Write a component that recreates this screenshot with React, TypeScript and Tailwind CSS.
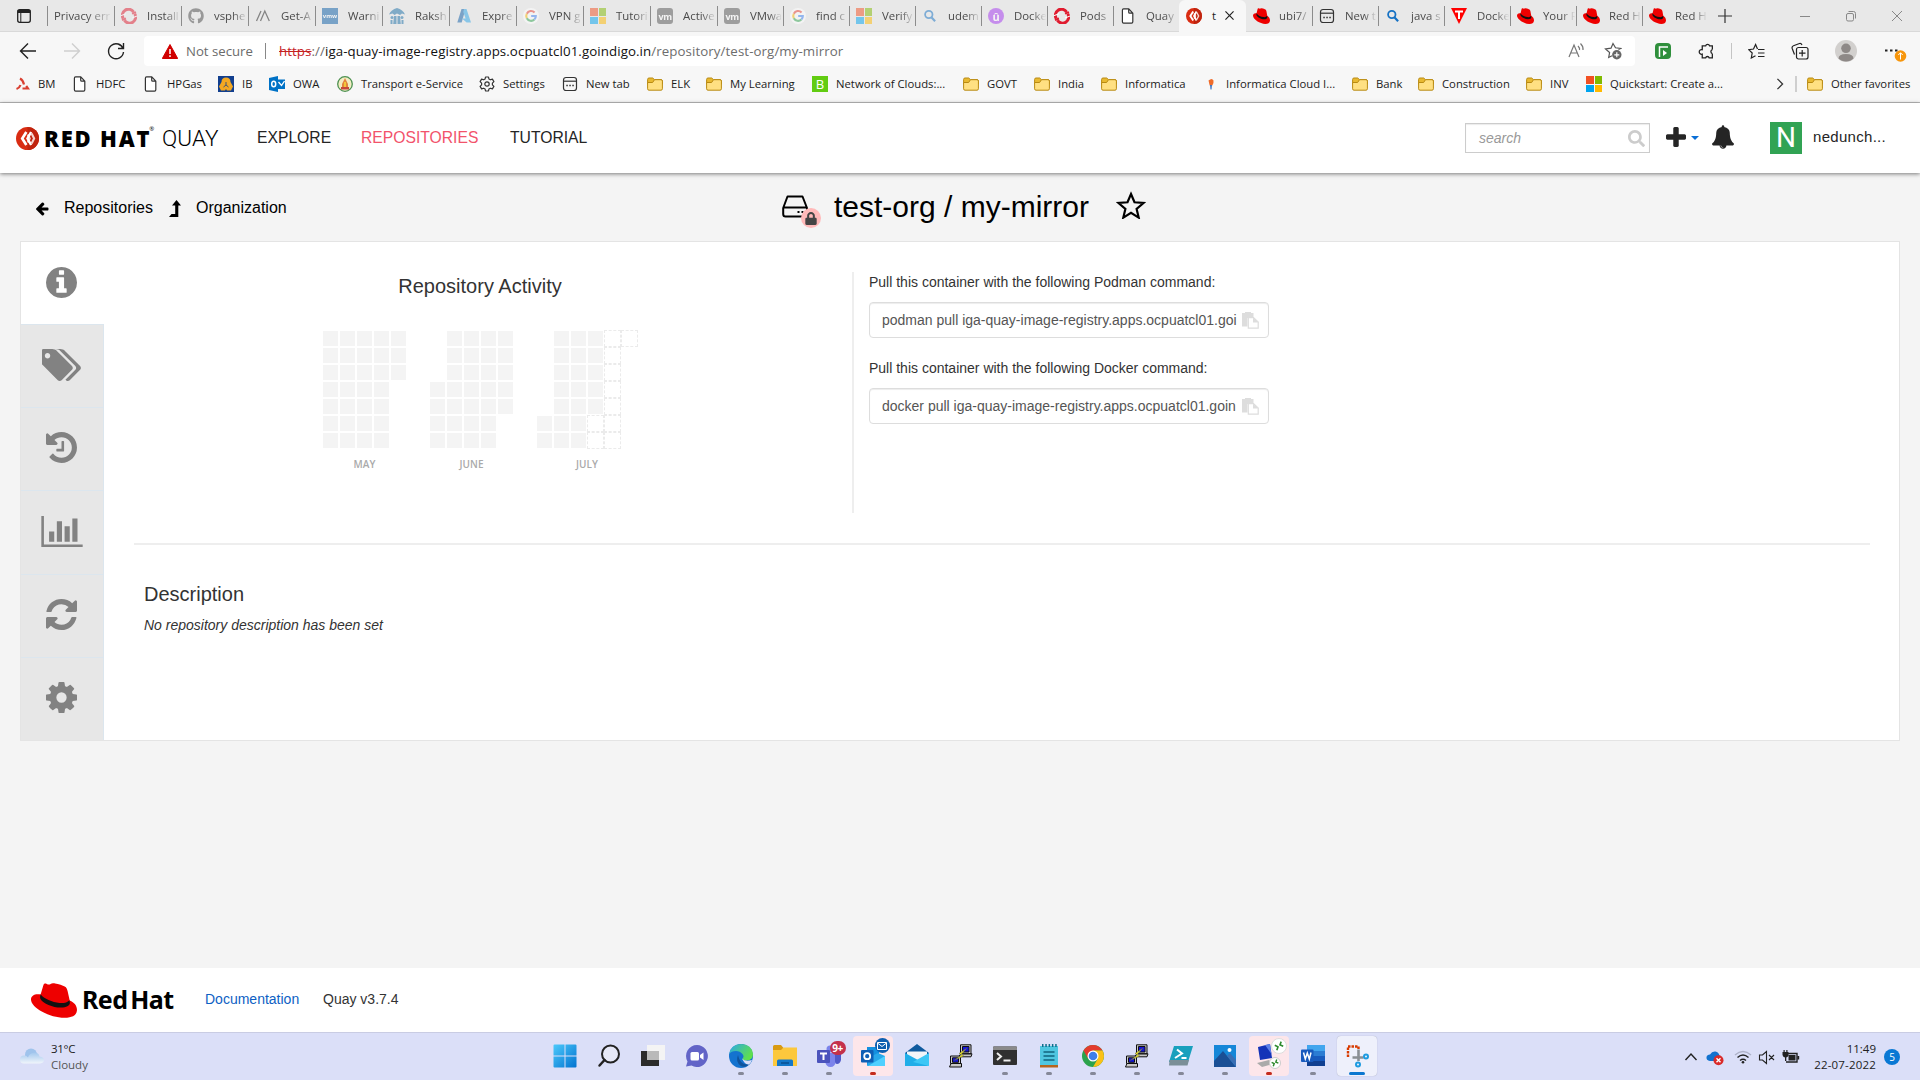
import React from "react";
import { FaSearch, FaLock, FaGithub } from "react-icons/fa";

type P = { children?: React.ReactNode; className?: string };

/* ---------- small drawings ---------- */

const RedHat = ({ className = "w-[17px] h-4" }: P) => (
  <svg viewBox="0 0 46 35" className={className} preserveAspectRatio="none">
    <path
      fill="#ee0000"
      d="M12.600 1.600C13 .6 14.200.2 15.400.7c1.600.8 2.600 1.200 3.800.6C20.400.7 22 .1 24 .4c3.600.6 8 2 9.700 3 1.800 1 2.500 2.600 3 5.200l2 9c5 2 7.700 6 7.200 10.200-.6 5-5.400 7-12.400 7C19 34.800 0 25 0 16.500c0-4 4-6 9.600-5z"
    />
    <path fill="#111" d="M9.600 11.300c-.5 2-.8 3.400-.1 4.600 2.400 4.600 12.500 8.600 20 8.700 5.500.1 9.500-1.500 9.400-5l-.5-2.400c-2 2.600-6 3-10 2.700-7-.5-15.500-4-18.800-8.600z" />
  </svg>
);
const Page = () => (
  <svg viewBox="0 0 16 16" className="h-4 w-4" fill="#fff" stroke="#333" strokeWidth="1.200" strokeLinejoin="round">
    <path d="M3.600.9h5.200l4 4.200v8.700q0 1.300-1.200 1.300h-8q-1.200 0-1.200-1.300V2.200Q2.400.9 3.600.9zM8.700 1v3.200q0 1 1 1h3" />
  </svg>
);
const OpenShift = () => (
  <svg viewBox="0 0 16 16" className="h-4 w-4" fill="none" stroke="#e01b2f" strokeWidth="3">
    <path d="M2.300 10.600A6 6 0 0 1 12.600 4M13.700 5.800A6 6 0 0 1 3.400 12.300" />
    <path d="M0 7.600l5-1.800M11 10l5-2" strokeWidth="1" stroke="#fff" />
    <path d="M11 5.600l4-1.500M1 12l4-1.500" strokeWidth="2" />
  </svg>
);
const Google = () => (
  <svg viewBox="0 0 18 18" className="h-4 w-4">
    <circle cx="9" cy="9" r="9" fill="#fff" />
    <g fill="none" strokeWidth="2.400">
      <path d="M13 5A5.400 5.400 0 0 0 4.300 6.400" stroke="#ea4335" />
      <path d="M4.300 6.400a5.400 5.400 0 0 0 0 5.200" stroke="#fbbc05" />
      <path d="M4.300 11.600A5.400 5.400 0 0 0 12.800 13" stroke="#34a853" />
      <path d="M12.800 13A5.400 5.400 0 0 0 14.400 9H9.200" stroke="#4285f4" />
    </g>
  </svg>
);
const Microsoft = () => (
  <span className="grid h-4 w-4 grid-cols-2 gap-px">
    <i className="bg-[#f25022]" />
    <i className="bg-[#7fba00]" />
    <i className="bg-[#00a4ef]" />
    <i className="bg-[#ffb900]" />
  </span>
);
const Vm = () => (
  <span className="flex h-4 w-4 items-center justify-center rounded-[3px] bg-[#555] text-[9px] font-bold leading-none tracking-[-0.5px] text-white">vm</span>
);
const Lens = () => (
  <svg viewBox="0 0 16 16" className="h-4 w-4" fill="none" stroke="#1672c4" strokeWidth="1.800">
    <circle cx="6.800" cy="6.500" r="3.700" />
    <path d="M9.600 9.600l3.500 3.700" strokeWidth="2.200" />
  </svg>
);
const Folder = () => (
  <svg viewBox="0 0 16 16" className="h-4 w-4" stroke="#b98a12" strokeWidth="1">
    <path fill="#e8b931" d="M.6 3.500Q.6 2 2 2h3.700l1.800 1.700H14q1.400 0 1.400 1.400V8H.6z" />
    <path fill="#ffe082" d="M.6 6.500h5L7.500 3.700H14q1.400 0 1.400 1.400v7.700q0 1.400-1.400 1.400H2Q.6 14.200.6 12.800z" />
  </svg>
);
const NewTab = () => (
  <svg viewBox="0 0 16 16" className="h-4 w-4" fill="none" stroke="#333" strokeWidth="1.200">
    <rect x="1.500" y="1.500" width="13" height="13" rx="2.500" />
    <path d="M1.500 5.200h13" />
    <path d="M4.300 9.500h1.500m1.500 0h1.500m1.500 0h1.500" strokeWidth="1.600" />
  </svg>
);
const QuayDot = ({ className = "h-4 w-4" }: P) => (
  <svg viewBox="0 0 24 24" className={className} fill="none">
    <circle cx="12" cy="12" r="12" fill="#d92c12" />
    <path d="M12 0a12 12 0 0 1 0 24z" fill="#c0240e" />
    <path stroke="#fff" strokeWidth="2.800" d="M10.800 5.200L6.500 12l4.300 6.800" />
    <path stroke="#f6d5cf" strokeWidth="2.200" d="M12.300 7.800l2 4.200-2 4.200" />
    <path stroke="#fff" strokeWidth="2.600" d="M15.800 5.200L12 12l3.800 6.800" />
    <path stroke="#f6d5cf" strokeWidth="2.200" d="M16.300 6.800l2.600 5.200-2.600 5.200" />
  </svg>
);
const Clipboard = ({ className }: P) => (
  <svg viewBox="0 0 17 17" className={className}>
    <path fill="#ddd" d="M0 1h3V0h6v1h2.500v5H5.500v8.500H0z" />
    <path fill="#fff" stroke="#ddd" strokeWidth="1.200" d="M6.300 5.600h5.200l4.700 4.300v6.300H6.300z" />
    <path fill="#ddd" d="M11 5.500v5h5.500z" />
  </svg>
);
const FA = ({ d, vb = "128 128 1536 1536", className, fill = "#828282" }: { d: string; vb?: string; className: string; fill?: string }) => (
  <svg viewBox={vb} className={className} fill={fill}>
    <path d={d} />
  </svg>
);

const dInfo =
  "M1152 1376v-160q0-14-9-23t-23-9h-96v-512q0-14-9-23t-23-9h-320q-14 0-23 9t-9 23v160q0 14 9 23t23 9h96v320h-96q-14 0-23 9t-9 23v160q0 14 9 23t23 9h448q14 0 23-9t9-23zm-128-896v-160q0-14-9-23t-23-9h-192q-14 0-23 9t-9 23v160q0 14 9 23t23 9h192q14 0 23-9t9-23zm640 416q0 209-103 385.500t-279.500 279.500-385.500 103-385.500-103-279.500-279.500-103-385.500 103-385.500 279.500-279.500 385.500-103 385.500 103 279.500 279.500 103 385.500z";
const dTags =
  "M384 448q0-53-37.500-90.500t-90.500-37.500-90.500 37.500-37.500 90.500 37.500 90.500 90.500 37.500 90.500-37.500 37.500-90.500zm1067 576q0 53-37 90l-491 492q-39 37-91 37-53 0-90-37l-715-716q-38-37-64.500-101t-26.500-117v-416q0-52 38-90t90-38h416q53 0 117 26.500t102 64.500l715 714q37 39 37 91zm384 0q0 53-37 90l-491 492q-39 37-91 37-36 0-59-14t-53-45l470-470q37-37 37-90 0-52-37-91l-715-714q-38-38-102-64.500t-117-26.500h224q53 0 117 26.500t102 64.500l715 714q37 39 37 91z";
const dHistory =
  "M1664 896q0 156-61 298t-164 245-245 164-298 61q-172 0-327-72.500t-264-204.500q-7-10-6.500-22.500t8.500-20.500l137-138q10-9 25-9 16 2 23 12 73 95 179 147t225 52q104 0 198.500-40.500t163.500-109.500 109.500-163.500 40.500-198.500-40.500-198.500-109.500-163.500-163.500-109.500-198.500-40.500q-98 0-188 35.500t-160 101.500l137 138q31 30 14 69-17 40-59 40h-448q-26 0-45-19t-19-45v-448q0-42 40-59 39-17 69 14l130 129q107-101 244.500-156.500t284.500-55.500q156 0 298 61t245 164 164 245 61 298zm-640-288v448q0 14-9 23t-23 9h-320q-14 0-23-9t-9-23v-64q0-14 9-23t23-9h224v-352q0-14 9-23t23-9h64q14 0 23 9t9 23z";
const dChart =
  "M640 896v512h-256v-512h256zm384-512v1024h-256v-1024h256zm1024 1152v128h-2048v-1536h128v1408h1920zm-640-896v768h-256v-768h256zm384-384v1152h-256v-1152h256z";
const dRefresh =
  "M1639 1056q0 5-1 7-64 268-268 434.500t-478 166.500q-146 0-282.500-55t-243.500-157l-129 129q-19 19-45 19t-45-19-19-45v-448q0-26 19-45t45-19h448q26 0 45 19t19 45-19 45l-137 137q71 66 161 102t187 36q134 0 250-65t186-179q11-17 53-117 8-23 30-23h192q13 0 22.500 9.500t9.500 22.500zm25-800v448q0 26-19 45t-45 19h-448q-26 0-45-19t-19-45 19-45l138-138q-148-137-349-137-134 0-250 65t-186 179q-11 17-53 117-8 23-30 23h-199q-13 0-22.500-9.500t-9.500-22.500v-7q65-268 270-434.500t480-166.500q146 0 284 55.500t245 156.500l130-129q19-19 45-19t45 19 19 45z";
const dCog =
  "M1152 896q0-106-75-181t-181-75-181 75-75 181 75 181 181 75 181-75 75-181zm512-109v222q0 12-8 23t-20 13l-185 28q-19 54-39 91 35 50 107 138 10 12 10 25t-9 23q-27 37-99 108t-94 71q-12 0-26-9l-138-108q-44 23-91 38-16 136-29 186-7 28-36 28h-222q-14 0-24.500-8.500t-11.500-21.500l-28-184q-49-16-90-37l-141 107q-10 9-25 9-14 0-25-11-126-114-165-168-7-10-7-23 0-12 8-23 15-21 51-66.500t54-70.500q-27-50-41-99l-183-27q-13-2-21-12.500t-8-23.500v-222q0-12 8-23t19-13l186-28q14-46 39-92-40-57-107-138-10-12-10-24 0-10 9-23 26-36 98.500-107.500t94.500-71.500q13 0 26 10l138 107q44-23 91-38 16-136 29-186 7-28 36-28h222q14 0 24.500 8.500t11.500 21.500l28 184q49 16 90 37l142-107q9-9 24-9 13 0 25 10 129 119 165 170 7 8 7 22 0 12-8 23-15 21-51 66.500t-54 70.500q26 50 41 98l183 28q13 2 21 12.500t8 23.500z";
const dBell =
  "M912 1696q0-16-16-16-59 0-101.500-42.500t-42.500-101.500q0-16-16-16t-16 16q0 73 51.500 124.500t124.500 51.500q16 0 16-16zm816-288q0 52-38 90t-90 38h-448q0 106-75 181t-181 75-181-75-75-181h-448q-52 0-90-38t-38-90q50-42 91-88t85-119.500 74.500-158.500 50-206 19.500-260q0-152 117-282.500t307-158.500q-8-19-8-39 0-40 28-68t68-28 68 28 28 68q0 20-8 39 190 28 307 158.500t117 282.500q0 139 19.500 260t50 206 74.500 158.500 85 119.500 91 88z";
const dPlus =
  "M1600 736v192q0 40-28 68t-68 28h-416v416q0 40-28 68t-68 28h-192q-40 0-68-28t-28-68v-416h-416q-40 0-68-28t-28-68v-192q0-40 28-68t68-28h416v-416q0-40 28-68t68-28h192q40 0 68 28t28 68v416h416q40 0 68 28t28 68z";
const dArrow =
  "M1664 896v128q0 53-32.500 90.500t-84.500 37.500h-704l293 294q38 36 38 90t-38 90l-75 76q-37 37-90 37-52 0-91-37l-651-652q-37-37-37-90 0-52 37-91l651-650q38-38 91-38 52 0 90 38l75 74q38 38 38 91t-38 91l-293 293h704q52 0 84.500 37.500t32.500 90.500z";

/* ---------- tab strip ---------- */

const GetA = () => (
  <svg viewBox="0 0 16 16" className="h-4 w-4" fill="none" stroke="#222" strokeWidth="1.300">
    <path d="M1.500 13L6 3M5.500 13L9.800 3 14.300 13" />
  </svg>
);
const Umbrella = () => (
  <svg viewBox="0 0 16 16" className="h-4 w-4" fill="#1b6fa8">
    <path d="M0 6.500Q2 1.500 8 0q6 1.500 8 6.500l-3-1-2 1.500L8 5.500 5.500 7 3.500 5.500z" />
    <path d="M5 8h2.500v8H4.200zM8.500 8H11l.8 8H8.500z" />
    <circle cx="3" cy="9.500" r="1.500" />
    <circle cx="13" cy="9.500" r="1.500" />
    <path d="M1.500 12h2v4h-2zM12.500 12h2v4h-2z" />
  </svg>
);
const Azure = () => (
  <svg viewBox="0 0 16 16" className="h-4 w-4">
    <path fill="#0f5ea8" d="M5.500 1h4L5.700 14.500H1.300z" />
    <path fill="#2da6e8" d="M8 1h2.500L15 14.500h-4.400L6 10.500h3.600L7.300 4z" />
  </svg>
);
const Udemy = () => (
  <span className="flex h-4 w-4 items-center justify-center rounded-full bg-[#a435f0] text-[11px] font-bold leading-none text-white">û</span>
);
const RedT = () => (
  <svg viewBox="0 0 16 16" className="h-4 w-4">
    <path d="M0 0h16L8 16z" fill="#f00" />
    <path d="M4 3.500h8M8 3.500V11" stroke="#fff" strokeWidth="2" />
  </svg>
);
const Vmw = () => (
  <span className="flex h-4 w-4 items-center justify-center bg-[#0a5fa8] text-[6px] font-bold leading-none text-white">vmw</span>
);

const tabs: { t: string; i?: React.ReactNode; dim?: boolean; active?: boolean }[] = [
  { t: "Privacy err" },
  { t: "Install", i: <OpenShift />, dim: true },
  { t: "vsphe", i: <FaGithub className="h-4 w-4" />, dim: true },
  { t: "Get-A", i: <GetA />, dim: true },
  { t: "Warni", i: <Vmw />, dim: true },
  { t: "Raksh", i: <Umbrella />, dim: true },
  { t: "Expre", i: <Azure />, dim: true },
  { t: "VPN g", i: <Google />, dim: true },
  { t: "Tutori", i: <Microsoft />, dim: true },
  { t: "Active", i: <Vm />, dim: true },
  { t: "VMwa", i: <Vm />, dim: true },
  { t: "find c", i: <Google />, dim: true },
  { t: "Verify", i: <Microsoft />, dim: true },
  { t: "udem", i: <Lens />, dim: true },
  { t: "Docke", i: <Udemy />, dim: true },
  { t: "Pods", i: <OpenShift /> },
  { t: "Quay", i: <Page /> },
  { t: "t", i: <QuayDot />, active: true },
  { t: "ubi7/", i: <RedHat /> },
  { t: "New t", i: <NewTab /> },
  { t: "java s", i: <Lens /> },
  { t: "Docke", i: <RedT /> },
  { t: "Your R", i: <RedHat /> },
  { t: "Red H", i: <RedHat /> },
  { t: "Red H", i: <RedHat /> },
];

function TabStrip() {
  return (
    <div className="flex h-8 items-center bg-[#e8e8e8] text-[11.400px] text-[#4a4a4a] shadow-[inset_0_-1px_0_#d9d9d9]">
      <div className="flex w-[47px] justify-center">
        <svg viewBox="0 0 16 16" className="h-4 w-4" fill="none" stroke="#222" strokeWidth="1.300">
          <rect x="1.700" y="1.700" width="12.600" height="12.600" rx="2" />
          <path d="M1.700 3.500h12.600" strokeWidth="3" />
          <path d="M4.800 4v10" strokeWidth="1" />
        </svg>
      </div>
      {tabs.map((tab, n) => (
        <div
          key={n}
          className={
            (n < 10 || n === 17 ? "w-[67px] " : "w-[66px] ") +
            (tab.active ? "flex h-8 shrink-0 items-center rounded-t-md bg-[#f7f7f7] text-[#222]" : "flex h-8 shrink-0 items-center")
          }
        >
          <i className={tab.active || n === 18 ? "h-5 w-px shrink-0" : "h-5 w-px shrink-0 bg-[#8c8c8c]"} />
          {tab.i ? (
            <span className={tab.dim ? "ml-1.5 flex w-[26px] shrink-0 opacity-50" : "ml-1.5 flex w-[26px] shrink-0"}>{tab.i}</span>
          ) : (
            <span className="w-1.5 shrink-0" />
          )}
          {tab.active ? (
            <span className="flex items-center gap-[9px]">
              t
              <svg viewBox="0 0 10 10" className="h-[9px] w-[9px]" stroke="#222" strokeWidth="1.300">
                <path d="M.5.5l9 9M9.500.5l-9 9" />
              </svg>
            </span>
          ) : (
            <span className="flex-1 overflow-hidden whitespace-nowrap [mask-image:linear-gradient(to_right,black_55%,transparent_98%)]">{tab.t}</span>
          )}
        </div>
      ))}
      <svg viewBox="0 0 14 14" className="ml-[10px] h-[14px] w-[14px]" stroke="#333" strokeWidth="1.200">
        <path d="M7 0v14M0 7h14" />
      </svg>
      <svg viewBox="0 0 104 12" className="ml-auto mr-[17px] h-3 w-[104px]" fill="none" stroke="#888" strokeWidth="1">
        <path d="M1 6.500h10M93 1l10 10M103 1L93 11" />
        <rect x="47.500" y="3.500" width="7" height="7.500" rx="1.500" />
        <path d="M49.500 1.500h5q2 0 2 2v5" />
      </svg>
    </div>
  );
}

/* ---------- address bar ---------- */

function AddressBar() {
  return (
    <div className="flex h-[38px] items-center bg-[#f7f7f7]">
      <svg viewBox="0 0 144 20" className="h-5 w-36 shrink-0" fill="none" stroke="#222" strokeWidth="1.400">
        <path d="M36 10H20.500M28 2.500L20.500 10l7.500 7.500" />
        <path d="M64 10h15.500M72 2.500l7.500 7.500-7.500 7.500" stroke="#cfcfcf" />
        <path d="M123.200 8A7.500 7.500 0 1 0 123.500 11M123.500 2v5.500H118" />
      </svg>
      <div className="flex h-[30px] w-[1491px] shrink-0 items-center rounded bg-white">
        <svg viewBox="0 0 16 15" className="ml-[18px] h-[15px] w-4">
          <path d="M8 .5L15.700 14.500H.3z" fill="#d00000" stroke="#d00000" strokeLinejoin="round" />
          <path d="M8 5v5M8 11.200v1.700" stroke="#fff" strokeWidth="1.500" />
        </svg>
        <span className="ml-2 w-[70px] whitespace-nowrap pt-px text-[13.200px] text-[#6b6b6b]">Not secure</span>
        <i className="mx-[9px] h-4 w-px bg-[#888]" />
        <span className="ml-1 whitespace-nowrap pt-px text-[13.300px] tracking-[0.080px] text-[#6d6d6d]">
          <span className="text-[#c5221f] line-through">https</span>://<span className="text-[#111]">iga-quay-image-registry.apps.ocpuatcl01.goindigo.in</span>
          /repository/test-org/my-mirror
        </span>
        <svg viewBox="0 0 54 18" className="ml-auto mr-[13px] h-[18px] w-[54px]" fill="none" stroke="#777" strokeWidth="1.200">
          <path d="M1 15L6 3l5 12M2.600 11h6.800M10 4q2 2 1.500 4M12.500 1.500q3 3 2.500 6.500" />
          <path d="M50.500 7.500l2-1-5-.7L45 1.500 43 6.200l-5.500.8 4.100 3.500-.9 5 3.300-1.700" stroke="#555" />
          <circle cx="48.800" cy="12.800" r="4.700" fill="#666" stroke="none" />
          <path d="M48.800 10.300v5M46.300 12.800h5" stroke="#fff" />
        </svg>
      </div>
      <div className="ml-5 flex h-4 w-4 items-center justify-center rounded-sm bg-[#2f8f3c]">
        <svg viewBox="0 0 16 16" className="h-4 w-4" fill="none" stroke="#fff" strokeWidth="1.500">
          <path d="M4.500 14V4h8.500" />
          <path d="M8 7l4 3-4 3z" fill="#fff" stroke="none" />
        </svg>
      </div>
      <svg viewBox="0 0 16 16" className="ml-[27px] h-[17px] w-[17px]" fill="none" stroke="#222" strokeWidth="1.200">
        <path d="M5 2.800h2.200a1.900 1.900 0 0 1 3.700 0H13.500v3.400M13.500 10v4H10.500a1.700 1.700 0 0 0-3.300 0H4V10.500a2.200 2.200 0 1 1 0-4.200V2.800h1M13.500 6.200a2 2 0 0 0 0 3.800" />
      </svg>
      <i className="ml-4 h-4 w-px bg-[#c4c4c4]" />
      <svg viewBox="0 0 18 16" className="ml-4 h-4 w-[18px]" fill="none" stroke="#222" strokeWidth="1.200">
        <path d="M9.500 6L7.600 1.500 5.500 6l-4.800.7L4.200 10l-.9 5L7.500 12.800M10 6.500h6.500M10 10h6.500M10 13.500h6.500" />
      </svg>
      <svg viewBox="0 0 18 18" className="ml-[25px] h-[18px] w-[18px]" fill="none" stroke="#222" strokeWidth="1.200">
        <rect x="5.500" y="5.500" width="11.500" height="11.500" rx="2" />
        <path d="M11.200 8v6.500M8 11.200h6.500M3.500 12.500L1.200 6.500q-.6-2 1.300-2.700l6-2.300q1.600-.5 2.500 1.500" />
      </svg>
      <svg viewBox="0 0 22 22" className="ml-[26px] h-[22px] w-[22px]">
        <circle cx="11" cy="11" r="11" fill="#d2d0ce" />
        <circle cx="11" cy="8.300" r="4.800" fill="#8e8987" />
        <path d="M3.500 18.500q0-4.500 7.500-4.500t7.500 4.500q-3 3-7.500 3t-7.500-3z" fill="#8e8987" />
      </svg>
      <svg viewBox="0 0 24 24" className="ml-[27px] h-6 w-6">
        <path d="M1 11.500h2.500M6 11.500h2.500M11 11.500h2.500" stroke="#222" strokeWidth="2.200" />
        <circle cx="16.500" cy="17" r="5.800" fill="#f7960c" />
        <path d="M16.500 20.500v-6.500M14.300 16l2.200-2.300 2.200 2.300" stroke="#fff" fill="none" />
      </svg>
    </div>
  );
}

/* ---------- favourites ---------- */

const Bm = () => (
  <svg viewBox="0 0 16 16" className="h-4 w-4" fill="none" stroke="#d94032" strokeWidth="2.200">
    <path d="M6 2.500q3 1.500 4 6M2.500 13q3-1 4-4M8.500 12.500h5.500l-1.800-2.500" />
  </svg>
);
const Ib = () => (
  <svg viewBox="0 0 16 16" className="h-4 w-4">
    <path fill="#123f8e" d="M0 0h16v16H0z" />
    <path fill="#f4a822" d="M8 1.500q4.500 0 4.500 4.500l2.500 4.500-2 4H9l-1-1.500-1 1.500H3l-2-4L3.500 6q0-4.500 4.500-4.500z" />
    <path stroke="#123f8e" fill="none" strokeWidth=".8" d="M8 6v3L5.500 11M8 9l2.500 2" />
  </svg>
);
const Owa = () => (
  <svg viewBox="0 0 16 16" className="h-4 w-4">
    <path fill="#0072c6" d="M0 2l9-2v16l-9-2zM9 3.500h7v9.500H9z" />
    <path fill="none" stroke="#fff" strokeWidth="1.300" d="M9.500 6l3 3.500L15.500 5" />
    <ellipse cx="4.700" cy="8" rx="2" ry="2.800" fill="none" stroke="#fff" strokeWidth="1.500" />
  </svg>
);
const Emblem = () => (
  <svg viewBox="0 0 16 16" className="h-4 w-4">
    <circle cx="8" cy="8" r="7.300" fill="#f3edc4" stroke="#4d9151" strokeWidth="1.300" />
    <path d="M8 2l3 6v3H5V8z" fill="#e2873c" />
    <path d="M4 11h8v2.500H4z" fill="#c5483a" />
    <path d="M7 6h2v5H7z" fill="#f2c838" />
  </svg>
);
const Gear = () => (
  <svg viewBox="0 0 16 16" className="h-4 w-4" fill="none" stroke="#333" strokeWidth="1.200" strokeLinejoin="round">
    <path d="M6.500 1h3l.4 2 1.500.8 2-.7 1.500 2.500-1.500 1.500v1.800l1.500 1.500-1.500 2.500-2-.7-1.500.8-.4 2h-3l-.4-2-1.500-.8-2 .7-1.500-2.500 1.500-1.500V7.100L1.100 5.600l1.500-2.500 2 .7L6.100 3z" />
    <circle cx="8" cy="8" r="2.200" />
  </svg>
);
const GreenB = () => <span className="flex h-4 w-4 items-center justify-center bg-[#62cc12] text-[13px] leading-none text-white">B</span>;
const Pin = () => (
  <svg viewBox="0 0 16 16" className="h-4 w-4">
    <path d="M6.500 4.500q3.500-3 5 0 .5 2-1.200 5H7.700z" fill="#ef6c2b" />
    <path d="M8 9h2l-.5 4.500h-1z" fill="#3a72c4" />
  </svg>
);

const favs: [string, React.ReactNode, string][] = [
  ["BM", <Bm />, "w-[58px]"],
  ["HDFC", <Page />, "w-[71px]"],
  ["HPGas", <Page />, "w-[75px]"],
  ["IB", <Ib />, "w-[51px]"],
  ["OWA", <Owa />, "w-[68px]"],
  ["Transport e-Service", <Emblem />, "w-[142px]"],
  ["Settings", <Gear />, "w-[83px]"],
  ["New tab", <NewTab />, "w-[85px]"],
  ["ELK", <Folder />, "w-[59px]"],
  ["My Learning", <Folder />, "w-[106px]"],
  ["Network of Clouds:...", <GreenB />, "w-[151px]"],
  ["GOVT", <Folder />, "w-[71px]"],
  ["India", <Folder />, "w-[67px]"],
  ["Informatica", <Folder />, "w-[101px]"],
  ["Informatica Cloud I...", <Pin />, "w-[150px]"],
  ["Bank", <Folder />, "w-[66px]"],
  ["Construction", <Folder />, "w-[108px]"],
  ["INV", <Folder />, "w-[60px]"],
  ["Quickstart: Create a...", <Microsoft />, "w-[190px]"],
];

function Favourites() {
  return (
    <div className="flex h-[33px] items-center border-b border-[#bdbdbd] bg-[#f7f7f7] pb-1 pl-[14px] text-[11.300px] text-[#1b1b1b]">
      {favs.map(([t, icon, w]) => (
        <div key={t} className={"flex shrink-0 items-center gap-2 whitespace-nowrap " + w}>
          {icon}
          {t}
        </div>
      ))}
      <svg viewBox="0 0 8 14" className="h-3 w-2" fill="none" stroke="#333" strokeWidth="1.500">
        <path d="M1 1l6 6-6 6" />
      </svg>
      <i className="ml-[11px] mr-[10px] h-4 w-0.5 bg-[#cfcfcf]" />
      <div className="flex items-center gap-2 whitespace-nowrap">
        <Folder />
        Other favorites
      </div>
    </div>
  );
}

/* ---------- Quay page ---------- */

function Header() {
  return (
    <header className="relative z-10 flex h-[70px] shrink-0 items-center bg-white shadow-[0_1px_4px_rgba(0,0,0,0.5)]">
      <QuayDot className="ml-4 h-[23px] w-[23px]" />
      <span className="ml-[5px] flex w-[118px] whitespace-nowrap font-['Open_Sans'] text-[22px] font-extrabold tracking-[1.800px] text-black">
        RED HAT<span className="-ml-0.5 mt-1 text-[6px] font-normal leading-none tracking-normal">®</span>
      </span>
      <span className="w-[95px] pt-0.5 font-['Roboto'] text-[22.500px] font-light tracking-[0.100px] text-black">QUAY</span>
      <nav className="flex text-[15.700px] text-[#252525]">
        <a className="w-[104px]">EXPLORE</a>
        <a className="w-[149px] text-[#f2536b]">REPOSITORIES</a>
        <a>TUTORIAL</a>
      </nav>
      <div className="ml-auto flex h-[30px] w-[185px] items-center justify-between border border-[#ccc] pl-[13px] pr-1 text-sm italic text-[#999] shadow-[inset_0_1px_1px_rgba(0,0,0,0.08)]">
        search
        <FaSearch className="h-[17px] w-[17px] text-[#ccc]" />
      </div>
      <FA d={dPlus} vb="192 128 1408 1408" className="-mt-0.5 ml-4 h-5 w-5" fill="#252525" />
      <svg viewBox="0 0 8 4" className="ml-[5px] h-1 w-2" fill="#0a6fd6">
        <path d="M0 0h8L4 4z" />
      </svg>
      <FA d={dBell} vb="64 0 1664 1792" className="-mt-0.5 ml-[13px] h-6 w-[22px]" fill="#252525" />
      <span className="ml-9 flex h-8 w-8 items-center justify-center bg-[#31a354] font-['Roboto'] text-[28px] text-white">N</span>
      <span className="ml-[11px] mr-[18px] w-[89px] pb-0.5 text-[15px] tracking-[0.300px] text-[#252525]">nedunch...</span>
    </header>
  );
}

function TitleRow() {
  return (
    <div className="grid h-[68px] shrink-0 grid-cols-[782px_1fr] items-center text-black">
      <div className="flex items-center pl-[35px]">
        <FA d={dArrow} vb="128 128 1536 1664" className="mt-1 h-[14px] w-[14px]" fill="#000" />
        <span className="ml-[15px] w-[105px] pt-0.5 text-base">Repositories</span>
        <svg viewBox="0 0 12 17" className="mt-0.5 h-[17px] w-3">
          <path d="M7.500 0l4.500 5.500H9.300V17H0l2.500-3H6.200V5.500H3z" fill="#000" />
        </svg>
        <span className="ml-[15px] pt-0.5 text-base">Organization</span>
      </div>
      <div className="flex items-center">
        <div className="relative h-[34px] w-10">
          <svg viewBox="0 0 27 23" className="absolute left-0 top-[5px] h-[23px] w-[27px]" fill="none" stroke="#000" strokeWidth="2" strokeLinejoin="round">
            <path d="M5.500 1.500h15L25 13v6q0 2.500-2 2.500H3.500q-2.300 0-2.300-2.500v-6zM1.500 12.500h23.500" />
            <path d="M15.500 17h2M19.500 17h2" />
          </svg>
          <span className="absolute left-[19px] top-[18px] flex h-5 w-5 items-center justify-center rounded-full bg-[#ffb9b9]">
            <FaLock className="h-[13px] w-[12px] text-[#444]" />
          </span>
        </div>
        <h1 className="ml-3 w-[282px] whitespace-nowrap text-[30px] leading-none">test-org / my-mirror</h1>
        <svg viewBox="0 0 30 28" className="-mt-1 h-7 w-[30px]" fill="none" stroke="#000" strokeWidth="2.200">
          <path d="M15 3l3.500 8.300 9 .7-6.900 5.900 2.100 8.700L15 21.900l-7.700 4.700 2.100-8.700L2.500 12l9-.7z" />
        </svg>
      </div>
    </div>
  );
}

/* one string per weekday row: f = past day, d = upcoming day, . = outside the month */
const months: [string, string[]][] = [
  ["MAY", ["fffff", "fffff", "fffff", "ffff.", "ffff.", "ffff.", "ffff."]],
  ["JUNE", [".ffff", ".ffff", ".ffff", "fffff", "fffff", "ffff.", "ffff."]],
  ["JULY", [".fffdd", ".fffd.", ".fffd.", ".fffd.", ".fffd.", "fffdd.", "fffdd."]],
];

function Activity() {
  return (
    <section className="flex w-[692px] flex-col items-center pt-[1px]">
      <h3 className="h-[58px] text-xl leading-[26px] text-[#333]">Repository Activity</h3>
      <div className="flex gap-6">
        {months.map(([name, rows]) => (
          <div key={name} className="flex flex-col items-center">
            <div className="flex flex-col gap-0.5">
              {rows.map((r, i) => (
                <div key={i} className="flex h-[15px] gap-0.5">
                  {r.split("").map((c, k) => (
                    <i
                      key={k}
                      className={
                        c === "f"
                          ? "h-[15px] w-[15px] bg-[#f4f4f4]"
                          : c === "d"
                            ? "-m-px h-[17px] w-[17px] border border-dashed border-[#ebebeb]"
                            : "h-[15px] w-[15px]"
                      }
                    />
                  ))}
                </div>
              ))}
            </div>
            <span className="mt-2 font-['Open_Sans'] text-[10px] font-semibold leading-4 tracking-[0.100px] text-[#aaa]">{name}</span>
          </div>
        ))}
      </div>
    </section>
  );
}

function Pull({ tool, cmd }: { tool: string; cmd: string }) {
  return (
    <div className="h-[86px] text-sm">
      <p className="h-[30px] leading-5 text-[#333]">Pull this container with the following {tool} command:</p>
      <div className="flex h-9 w-[400px] items-center rounded border border-[#ddd] pl-3 text-[#555] shadow-[inset_0_1px_1px_rgba(0,0,0,0.075)]">
        <span className="w-[355px] overflow-hidden whitespace-nowrap">{cmd}</span>
        <Clipboard className="ml-[5px] mt-px h-[17px] w-[17px]" />
      </div>
    </div>
  );
}

function Main() {
  const side = [
    <FA d={dTags} vb="0 128 1835 1515" className="h-8 w-[39px]" />,
    <FA d={dHistory} className="h-[31px] w-[31px]" />,
    <FA d={dChart} vb="0 128 2048 1536" className="h-[31px] w-[42px]" />,
    <FA d={dRefresh} className="h-[31px] w-[31px]" />,
    <FA d={dCog} className="h-[31px] w-[31px]" />,
  ];
  return (
    <main className="mx-5 flex h-[500px] shrink-0 border border-[#e4e4e4] bg-white">
      <aside className="flex w-[83px] shrink-0 flex-col">
        <div className="flex h-[82px] items-center justify-center pb-0.5 pr-[2px]">
          <FA d={dInfo} className="h-[31px] w-[31px]" />
        </div>
        {side.map((s, i) => (
          <div key={i} className="flex flex-1 items-center justify-center border-r border-t border-[#dce6ee] bg-[#e7e7e7] pb-[3px] pr-px">
            {s}
          </div>
        ))}
      </aside>
      <div className="flex-1 pl-[30px] pr-[29px] pt-[30px]">
        <div className="flex h-[271px]">
          <div className="h-[241px] w-[720px] border-r-2 border-[#eee]">
            <Activity />
          </div>
          <div className="pl-[15px]">
            <Pull tool="Podman" cmd="podman pull iga-quay-image-registry.apps.ocpuatcl01.goi" />
            <Pull tool="Docker" cmd="docker pull iga-quay-image-registry.apps.ocpuatcl01.goin" />
          </div>
        </div>
        <hr className="border-t-2 border-[#eee]" />
        <div className="pl-[10px] pt-9 text-[#333]">
          <h3 className="text-xl leading-[26px]">Description</h3>
          <p className="mt-2 text-sm italic leading-5">No repository description has been set</p>
        </div>
      </div>
    </main>
  );
}

function Footer() {
  return (
    <footer className="flex h-16 shrink-0 items-center bg-white text-sm">
      <RedHat className="ml-[31px] h-[35px] w-[46px]" />
      <span className="ml-[5px] w-[123px] whitespace-nowrap font-['Noto_Sans'] text-[25px] font-bold tracking-[-0.600px] text-black [word-spacing:-3px]">Red Hat</span>
      <a className="w-[118px] pb-0.5 text-[#0e5fc4]">Documentation</a>
      <span className="pb-0.5 text-[#333]">Quay v3.7.4</span>
    </footer>
  );
}

/* ---------- taskbar ---------- */

const S = ({ children, vb = "0 0 24 24" }: P & { vb?: string }) => (
  <svg viewBox={vb} className="h-6 w-6">
    {children}
  </svg>
);
const Putty = () => (
  <S>
    <path fill="#c8c8c8" stroke="#111" d="M11.500.8h10.500v9H11.500zM10 12l2-2.200h11l-1 3H11zM1.500 12h10v7.500h-10zM.5 23l1.500-3.500h10.500V23z" />
    <path fill="#1414d8" stroke="#111" d="M13.500 2.500h6.500v5.500h-6.500zM3.500 13.800h6v4.500h-6z" />
    <path fill="#f5ee20" stroke="#555" strokeWidth=".5" d="M18 4l-8 5.500 2.500 1.500L5 16.500l9.500-4.500-2-2z" />
  </S>
);

const apps: { i: React.ReactNode; run?: boolean; alert?: boolean; active?: boolean }[] = [
  {
    i: (
      <S>
        <defs>
          <linearGradient id="win" x1="0" y1="0" x2="1" y2="1">
            <stop offset="0" stopColor="#4cc9fb" />
            <stop offset="1" stopColor="#0273d0" />
          </linearGradient>
        </defs>
        <path fill="url(#win)" d="M.5 1.500Q.5.500 1.500.500H11.500V11.500H.5zM12.500.5h10q1 0 1 1v10h-11zM.5 12.500h11v11h-10q-1 0-1-1zM12.500 12.500h11v10q0 1-1 1h-10z" />
      </S>
    ),
  },
  {
    i: (
      <S>
        <circle cx="13.500" cy="10" r="8.500" fill="#e6e8f7" stroke="#222" strokeWidth="2" />
        <path d="M7.500 16l-5 5.500" stroke="#222" strokeWidth="2.500" strokeLinecap="round" />
      </S>
    ),
  },
  {
    i: (
      <S>
        <path fill="#2b2b2b" d="M0 7h18v15H0z" />
        <path fill="#f4f4f4" d="M6 1h18v15H6z" />
        <path fill="#b9b9b9" d="M6 7h12v9H6z" />
      </S>
    ),
  },
  {
    i: (
      <S>
        <path fill="#6264c7" d="M12 1a11 11 0 1 1-5.500 20.600L1 22.500l1.500-5A11 11 0 0 1 12 1z" />
        <rect x="5.500" y="8" width="8.500" height="8.500" rx="1.500" fill="#fff" />
        <path fill="#fff" d="M15 11l3.500-2.500v7.500L15 13.500z" />
      </S>
    ),
  },
  {
    run: true,
    i: (
      <S>
        <defs>
          <linearGradient id="edge" x1="0" y1="0" x2="1" y2=".5">
            <stop offset="0" stopColor="#2aa8ea" />
            <stop offset="1" stopColor="#5fe04c" />
          </linearGradient>
        </defs>
        <circle cx="12" cy="12" r="12" fill="#1473cf" />
        <path fill="url(#edge)" d="M.2 10Q2 0 12 0q11 .5 12 10 0 6-6.500 6.500-4 0-4-2 2-2 0-4.500Q11 7 7 7 2 7.200.2 10z" />
        <path fill="#dbdff8" d="M13 14.500q3 3.500 10 1.500-1 3-3.500 5-4-1-6.500-6.500z" />
        <path fill="#10549c" d="M9 11q-3 7 3 11 4 2 8-1.500-9 1-11-9.500z" />
      </S>
    ),
  },
  {
    run: true,
    i: (
      <S>
        <path fill="#d99a11" d="M0 2.500Q0 1 1.500 1H8l2.500 3H16v4H0z" />
        <path fill="#fcc83d" d="M0 6h8l2.500-2.500H24V22H0z" />
        <path fill="#1377c9" d="M4 22v-5q0-1.500 1.500-1.500h13q1.500 0 1.500 1.500v5z" />
        <path stroke="#0b4f91" strokeWidth="1.500" d="M8 19h8" />
      </S>
    ),
  },
  {
    run: true,
    i: (
      <span className="relative block h-6 w-6">
        <S>
          <circle cx="13" cy="5" r="3.500" fill="#7b83eb" />
          <path fill="#7b83eb" d="M8 9h11v8q-1 6-5.500 6T8 17z" />
          <path fill="#5059c9" d="M18 9h6v7q-1 4-4 4-2 0-2-3z" />
          <rect x="0" y="6" width="13" height="13" rx="1" fill="#4b53bc" />
          <path stroke="#fff" strokeWidth="2" d="M3 9.500h7M6.500 9.500V16" />
        </S>
        <span className="absolute -right-[5px] -top-[3px] flex h-[14px] w-4 items-center justify-center rounded-full bg-[#c4314b] text-[10px] font-bold tracking-[-0.500px] text-white">9+</span>
      </span>
    ),
  },
  {
    alert: true,
    i: (
      <span className="relative block h-6 w-6">
        <S>
          <path fill="#1490df" d="M6 3h12v18H6z" />
          <path fill="#28a8ea" d="M9 13l8-4 7 3v10H6z" />
          <path fill="#50d0ff" d="M7 22l17-10v10z" />
          <rect x="0" y="6" width="12.500" height="12.500" rx="1" fill="#0f5fb5" />
          <circle cx="6.200" cy="12.200" r="3" fill="none" stroke="#fff" strokeWidth="1.800" />
        </S>
        <span className="absolute -right-[5px] -top-[6px] flex h-[15px] w-[15px] items-center justify-center rounded-full bg-[#0d5fb0]">
          <svg viewBox="0 0 10 8" className="h-2 w-[10px]" fill="none" stroke="#fff">
            <path d="M.5.5h9v7h-9zM.5 1L5 4.500 9.500 1" />
          </svg>
        </span>
      </span>
    ),
  },
  {
    i: (
      <S>
        <path fill="#0f5a9e" d="M0 9L12 0l12 9v4H0z" />
        <path fill="#f2f5f8" d="M2 7.500h20v6L12 18 2 13.500z" />
        <path fill="#20aee8" d="M0 9l24 13H0z" />
        <path fill="#3cc7f5" d="M24 9L8 18l16 4z" />
      </S>
    ),
  },
  { i: <Putty /> },
  {
    run: true,
    i: (
      <S>
        <rect y="2.500" width="24" height="18.500" rx="1" fill="#303030" />
        <path fill="#8a8a8a" d="M0 3.500q0-1 1-1h22q1 0 1 1v2.500H0z" />
        <path fill="none" stroke="#eee" strokeWidth="2" d="M4 9l4 3.500L4 16M10.500 16.500h7" />
      </S>
    ),
  },
  {
    run: true,
    i: (
      <S>
        <path fill="#b5651d" d="M3 20h18v3.500H3z" />
        <path fill="#4fc6e0" d="M3 2h18v19H3z" />
        <path stroke="#0d6f8c" strokeWidth="3" strokeDasharray="1.500 1.800" d="M5 1.500h15" />
        <path stroke="#12647e" strokeWidth="1.600" d="M6.500 8h11M6.500 12h11M6.500 16h11" />
      </S>
    ),
  },
  {
    run: true,
    i: (
      <S>
        <circle cx="12" cy="12" r="11" fill="#2ba24c" />
        <path fill="#e33b2e" d="M2.500 6.500A11 11 0 0 1 21.500 6.500H12v5L7.200 14.700z" />
        <path fill="#fbc116" d="M21.500 6.500A11 11 0 0 1 12 23l4.800-8.300L12 6.500z" />
        <circle cx="12" cy="12" r="5.500" fill="#fff" />
        <circle cx="12" cy="12" r="4.300" fill="#3f7fe8" />
      </S>
    ),
  },
  { run: true, i: <Putty /> },
  {
    run: true,
    i: (
      <S>
        <path fill="#18a0bd" d="M5 2h19l-5 16H0z" />
        <path fill="#7b8f98" d="M.5 16H20l-1.500 5.500H0z" />
        <path fill="none" stroke="#fff" strokeWidth="2" d="M8 5.500l5 4-7 4.500M12.500 14h5" />
      </S>
    ),
  },
  {
    run: true,
    i: (
      <S>
        <path fill="#1587d8" d="M1 1h22v22H1z" />
        <path fill="#1a4f95" d="M1 17L10 7l13 16H1z" />
        <path fill="#3a6fb4" d="M14 12l3-3 6 7v7z" />
        <circle cx="16.500" cy="6" r="2" fill="#fff" />
      </S>
    ),
  },
  {
    alert: true,
    i: (
      <span className="relative block h-6 w-6">
        <S>
          <path fill="#1433b8" d="M1 3l12-3 2 14-12 2z" />
          <path fill="#5b7fe8" d="M8 1l5-1 1.500 10z" />
          <path fill="#aaa" d="M0 19l12-3 4 4-11 3z" />
        </S>
        <span className="absolute -right-[6px] -top-[6px] flex h-4 w-4 items-center justify-center rounded-full border border-[#ddd] bg-white">
          <svg viewBox="0 0 10 10" className="h-[10px] w-[10px]" fill="none" stroke="#2c8a2c" strokeWidth="1.600">
            <path d="M.8 4.200l3.200 1.600-1.200 3.400M9.200 5.200L6 3.800 7.200.6" />
          </svg>
        </span>
        <span className="absolute -bottom-[1px] right-0 flex h-3 w-3 items-center justify-center rounded-full border border-[#ccc] bg-white">
          <svg viewBox="0 0 10 10" className="h-2 w-2" fill="none" stroke="#2c8a2c" strokeWidth="1.800">
            <path d="M.8 4.200l3.200 1.600-1.200 3.400M9.200 5.200L6 3.800 7.200.6" />
          </svg>
        </span>
      </span>
    ),
  },
  {
    run: true,
    i: (
      <S>
        <path fill="#41a5ee" d="M6 1h18v6H6z" />
        <path fill="#2b7cd3" d="M6 7h18v5H6z" />
        <path fill="#185abd" d="M6 12h18v5H6z" />
        <path fill="#103f91" d="M6 17h18v5H6z" />
        <rect y="5.500" width="12.500" height="12.500" rx="1" fill="#185abd" />
        <path fill="none" stroke="#fff" strokeWidth="1.500" d="M2.500 8.500l1.800 6.500L6.300 9l2 6 1.700-6.500" />
      </S>
    ),
  },
  {
    active: true,
    i: (
      <S>
        <path fill="none" stroke="#d83b01" strokeWidth="2.400" strokeDasharray="2.500 1" d="M3 13V2.500h10.500V6" />
        <path stroke="#8a8f94" strokeWidth="2.600" d="M13.500 5.500V17M7.500 13.500h11" fill="none" />
        <circle cx="21" cy="12.500" r="2" fill="none" stroke="#1e9be0" strokeWidth="2" />
        <circle cx="13" cy="20.500" r="2" fill="none" stroke="#1e9be0" strokeWidth="2" />
      </S>
    ),
  },
];

function Taskbar() {
  return (
    <div className="grid h-12 shrink-0 grid-cols-[1fr_auto_1fr] items-center border-t border-[#c9cce3] bg-[#dbdff8] font-['Open_Sans'] text-[11.500px] text-[#222]">
      <div className="flex items-center pl-5">
        <svg viewBox="0 0 24 16" className="mb-0.5 h-[18px] w-6">
          <defs>
            <linearGradient id="cloud" x1="0" y1="0" x2="0" y2="1">
              <stop offset="0" stopColor="#a3c8ee" />
              <stop offset="1" stopColor="#f0f5fb" />
            </linearGradient>
          </defs>
          <circle cx="11" cy="6.500" r="6" fill="#9fc3ec" />
          <path fill="url(#cloud)" d="M4 15.500q-4 0-4-4t4-4q3 0 4 2 1-4.500 7-5 4 .5 4.500 4 4.500.500 4.500 3.500t-4 3.500z" />
        </svg>
        <div className="ml-[7px] leading-4">
          <div className="tracking-[-0.300px]">31°C</div>
          <div className="text-[#555]">Cloudy</div>
        </div>
      </div>
      <div className="flex gap-1 pb-px pl-px">
        {apps.map((a, n) => (
          <div
            key={n}
            className={
              "relative flex h-10 w-10 items-center justify-center rounded " +
              (a.alert ? "bg-[#fde6ea]" : a.active ? "bg-[#eef0fb] shadow-[0_0_1px_rgba(0,0,0,0.3)]" : "")
            }
          >
            {a.i}
            {(a.run || a.alert || a.active) && (
              <i
                className={
                  "absolute bottom-[1px] h-[3px] rounded-full " +
                  (a.active ? "w-4 bg-[#0b77d0]" : a.alert ? "w-1.5 bg-[#c42b1c]" : "w-1.5 bg-[#858898]")
                }
              />
            )}
          </div>
        ))}
      </div>
      <div className="flex items-center justify-end">
        <svg viewBox="0 0 116 20" className="h-5 w-[116px]" fill="none" stroke="#222" strokeWidth="1.400">
          <path d="M1.500 13L7 7l5.500 6" />
          <path fill="#1272cf" stroke="none" d="M26 14q-4-.5-3.500-4 .5-2.500 3.500-2.500Q28 4 31.500 4.500q3 .5 4 4 2.500 1 2.500 5.500z" />
          <circle cx="34.500" cy="13.200" r="5" fill="#d92a2a" stroke="none" />
          <path d="M32.500 11.200l4 4M36.500 11.200l-4 4" stroke="#fff" />
          <path d="M51 8q8-7 16 0" stroke="#aeb2c8" />
          <path d="M53.500 10.500q5.500-5 11 0M56 13.500q3-2.500 6 0" />
          <circle cx="59" cy="15.300" r="1.300" fill="#222" stroke="none" />
          <path d="M75.500 8v5h3l4 3.500v-12l-4 3.500zM85 8l5 5M90 8l-5 5" strokeWidth="1.100" />
          <path d="M103 6.500h10v8.500h-11M114.500 9v3.500" />
          <path fill="#222" stroke="none" d="M104.500 8h7v5.500h-7zM98.500 5h6v3q-.5 2-2.200 2.500V14h-1.300v-3.500Q99 10 98.500 8zM99.500 3h1.200v2h-1.200zM102.300 3h1.200v2h-1.200z" />
        </svg>
        <div className="ml-[6px] w-[70px] text-right leading-[15.500px]">
          <div>11:49</div>
          <div className="tracking-[0.180px]">22-07-2022</div>
        </div>
        <span className="ml-2 mr-5 flex h-4 w-4 items-center justify-center rounded-full bg-[#0a78d4] text-[10px] leading-none text-white">5</span>
      </div>
    </div>
  );
}

export default function App() {
  return (
    <div className="flex h-[1080px] w-[1920px] flex-col overflow-hidden bg-[#f4f4f4] font-['Liberation_Sans',sans-serif]">
      <div className="h-[103px] shrink-0 bg-[#f7f7f7] font-['Open_Sans',sans-serif]">
        <TabStrip />
        <AddressBar />
        <Favourites />
      </div>
      <Header />
      <TitleRow />
      <Main />
      <div className="flex-1" />
      <Footer />
      <Taskbar />
    </div>
  );
}
